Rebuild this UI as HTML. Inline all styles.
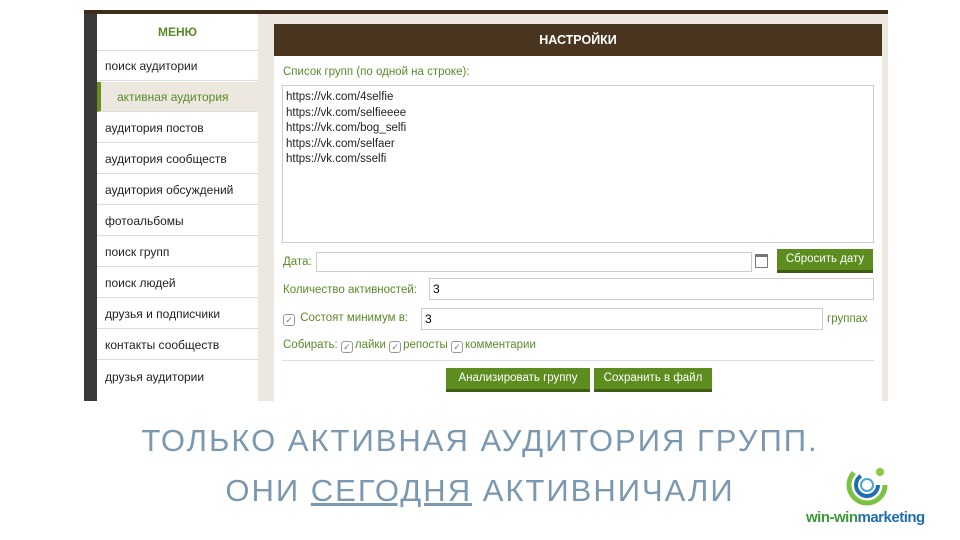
<!DOCTYPE html>
<html><head><meta charset="utf-8"><style>
body{margin:0;width:960px;height:540px;background:#fff;position:relative;overflow:hidden;font-family:"Liberation Sans","DejaVu Sans",sans-serif}
.a{position:absolute}
.shot{left:84px;top:10px;width:804px;height:391px;background:#ece8e0;}
.menu{left:97px;top:14px;width:161px;height:387px;background:#fff}
.mi{position:absolute;left:0;width:161px;height:30px;border-bottom:1px solid #ddd;font-size:12px;color:#222;line-height:30px;padding-left:8px;box-sizing:border-box}
.panel{left:274px;top:24px;width:608px;height:377px;background:#fff}
.g{color:#5a8a2a;font-size:11.5px}
.inp{position:absolute;border:1px solid #ccc;background:#fff;box-sizing:border-box;font-size:12px;padding-left:3px;line-height:20px}
.btn{position:absolute;background:#5d8c1f;color:#fff;font-size:11.5px;text-align:center;border-bottom:3px solid #3d5e12;box-sizing:border-box;line-height:20px}
.cb{display:inline-block;width:10px;height:10px;border:1px solid #999;border-radius:3px;vertical-align:-2px;margin-right:2px;font-size:9px;line-height:10px;text-align:center;color:#777}
.big{left:0;width:960px;text-align:center;font-size:31px;color:#7a98b0;letter-spacing:2px}
</style></head><body>
<div class="a shot"></div>
<div class="a" style="left:84px;top:10px;width:13px;height:391px;background:#3a3a3a"></div>
<div class="a" style="left:84px;top:10px;width:804px;height:4px;background:#3e2d1a"></div>
<div class="a menu">
<div class="mi" style="top:0;height:37px;line-height:36px;text-align:center;padding:0;color:#5a8a2a;font-weight:bold;font-size:12px">МЕНЮ</div>
<div class="mi" style="top:37px">поиск аудитории</div>
<div class="mi" style="top:68px;background:#ece8e0;color:#5a8a2a;padding-left:16px;border-left:4px solid #6b8e23">активная аудитория</div>
<div class="mi" style="top:99px">аудитория постов</div>
<div class="mi" style="top:130px">аудитория сообществ</div>
<div class="mi" style="top:161px">аудитория обсуждений</div>
<div class="mi" style="top:192px">фотоальбомы</div>
<div class="mi" style="top:223px">поиск групп</div>
<div class="mi" style="top:254px">поиск людей</div>
<div class="mi" style="top:285px">друзья и подписчики</div>
<div class="mi" style="top:316px">контакты сообществ</div>
<div class="mi" style="top:348px;border:0">друзья аудитории</div>
</div>
<div class="a panel">
<div class="a" style="left:0;top:0;width:608px;height:32px;background:#4a3620;color:#fff;font-weight:bold;font-size:12.5px;text-align:center;line-height:32px">НАСТРОЙКИ</div>
<div class="a g" style="left:9px;top:42px">Список групп (по одной на строке):</div>
<div class="inp" style="left:8px;top:61px;width:592px;height:158px;font-size:11.5px;line-height:15.5px;padding:4px 3px;color:#222">https://vk.com/4selfie<br>https://vk.com/selfieeee<br>https://vk.com/bog_selfi<br>https://vk.com/selfaer<br>https://vk.com/sselfi</div>
<div class="a g" style="left:9px;top:232px">Дата:</div>
<div class="inp" style="left:42px;top:228px;width:436px;height:20px"></div>
<div class="a" style="left:481px;top:230px;width:13px;height:14px;border:1px solid #777;box-sizing:border-box;border-top-width:3px"></div>
<div class="btn" style="left:503px;top:225px;width:96px;height:24px">Сбросить дату</div>
<div class="a g" style="left:9px;top:260px">Количество активностей:</div>
<div class="inp" style="left:155px;top:254px;width:445px;height:22px">3</div>
<div class="a g" style="left:9px;top:288px"><span class="cb">✓</span> Состоят минимум в:</div>
<div class="inp" style="left:147px;top:284px;width:402px;height:22px">3</div>
<div class="a g" style="left:553px;top:289px">группах</div>
<div class="a g" style="left:9px;top:315px">Собирать: <span class="cb">✓</span>лайки <span class="cb">✓</span>репосты <span class="cb">✓</span>комментарии</div>
<div class="a" style="left:8px;top:336px;width:592px;height:1px;background:#ddd"></div>
<div class="btn" style="left:172px;top:344px;width:144px;height:24px">Анализировать группу</div>
<div class="btn" style="left:320px;top:344px;width:118px;height:24px">Сохранить в файл</div>
</div>
<div class="a big" style="top:423px">ТОЛЬКО АКТИВНАЯ АУДИТОРИЯ ГРУПП.</div>
<div class="a big" style="top:473px">ОНИ <span style="text-decoration:underline">СЕГОДНЯ</span> АКТИВНИЧАЛИ</div>
<svg class="a" style="left:845px;top:463px" width="44" height="44" viewBox="0 0 44 44">
<circle cx="22" cy="22" r="18" fill="none" stroke="#7cc242" stroke-width="5" stroke-dasharray="70 43"/>
<circle cx="22" cy="22" r="11" fill="none" stroke="#1f6fb0" stroke-width="4" stroke-dasharray="45 24"/>
<circle cx="22" cy="22" r="6" fill="none" stroke="#4aa8d8" stroke-width="2"/>
<circle cx="35" cy="9" r="4" fill="#8dc63f"/>
</svg>
<div class="a" style="left:806px;top:509px;font-size:15px;font-weight:bold;color:#3a9a3a;letter-spacing:-0.5px">win-win<span style="color:#1f6fb0">marketing</span></div>
</body></html>
